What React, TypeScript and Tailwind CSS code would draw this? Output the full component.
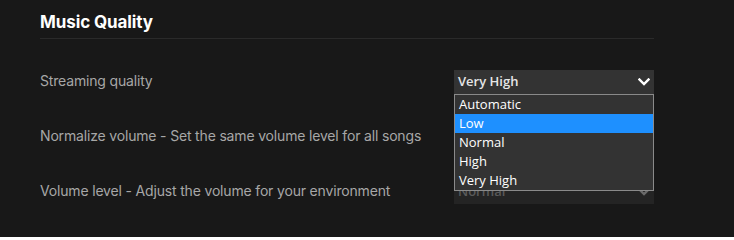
import React from "react";

function Chevron({ color }: { color: string }) {
  return (
    <svg width="12" height="8" viewBox="0 0 12 8" className="shrink-0">
      <polyline points="1.5,1.5 6,6 10.5,1.5" fill="none" stroke={color} strokeWidth="2.4" strokeLinecap="square" strokeLinejoin="miter" />
    </svg>
  );
}

export default function App() {
  const options = ["Automatic", "Low", "Normal", "High", "Very High"];
  return (
    <div className="w-[734px] h-[237px] bg-[#181818] overflow-hidden" style={{ fontFamily: "Inter, 'Liberation Sans', sans-serif" }}>
      <div className="ml-[40px] w-[614px] pt-[14px]">
        <div className="pb-[7px] border-b border-[#2a2a2a]">
          <h2 className="text-[17px] leading-[17px] font-bold text-white tracking-[-0.1px]">Music Quality</h2>
        </div>
        <div className="mt-[31px] flex flex-col gap-[31px] text-[14px] text-[#a7a7a7] tracking-[-0.17px]">
          <div className="h-6 flex items-center justify-between relative">
            <span className="pb-[3px]">Streaming quality</span>
            <div className="w-[200px] h-6 bg-[#333333] flex items-center justify-between pl-[4px] pr-[4px] tracking-normal" style={{ fontFamily: "'Open Sans', sans-serif" }}>
              <span className="text-[13px] font-semibold text-[#e6e6e6]">Very High</span>
              <Chevron color="#ffffff" />
            </div>
            <div className="absolute right-0 top-6 w-[200px] z-10 border border-[#8a8a8a] bg-[#333333] tracking-normal" style={{ fontFamily: "'Open Sans', sans-serif" }}>
              {options.map((o) => (
                <div key={o} className={`h-[19px] flex items-center pl-[4px] text-[13px] text-white ${o === "Low" ? "bg-[#1e90ff]" : ""}`}>
                  {o}
                </div>
              ))}
            </div>
          </div>
          <div className="h-6 flex items-center justify-between">
            <span className="pb-[3px]">Normalize volume - Set the same volume level for all songs</span>
          </div>
          <div className="h-6 flex items-center justify-between">
            <span className="pb-[3px]">Volume level - Adjust the volume for your environment</span>
            <div className="w-[200px] h-6 bg-[#242424] flex items-center justify-between pl-[4px] pr-[4px] tracking-normal" style={{ fontFamily: "'Open Sans', sans-serif" }}>
              <span className="text-[13px] font-semibold text-[#5a5a5a]">Normal</span>
              <Chevron color="#6a6a6a" />
            </div>
          </div>
        </div>
      </div>
    </div>
  );
}
